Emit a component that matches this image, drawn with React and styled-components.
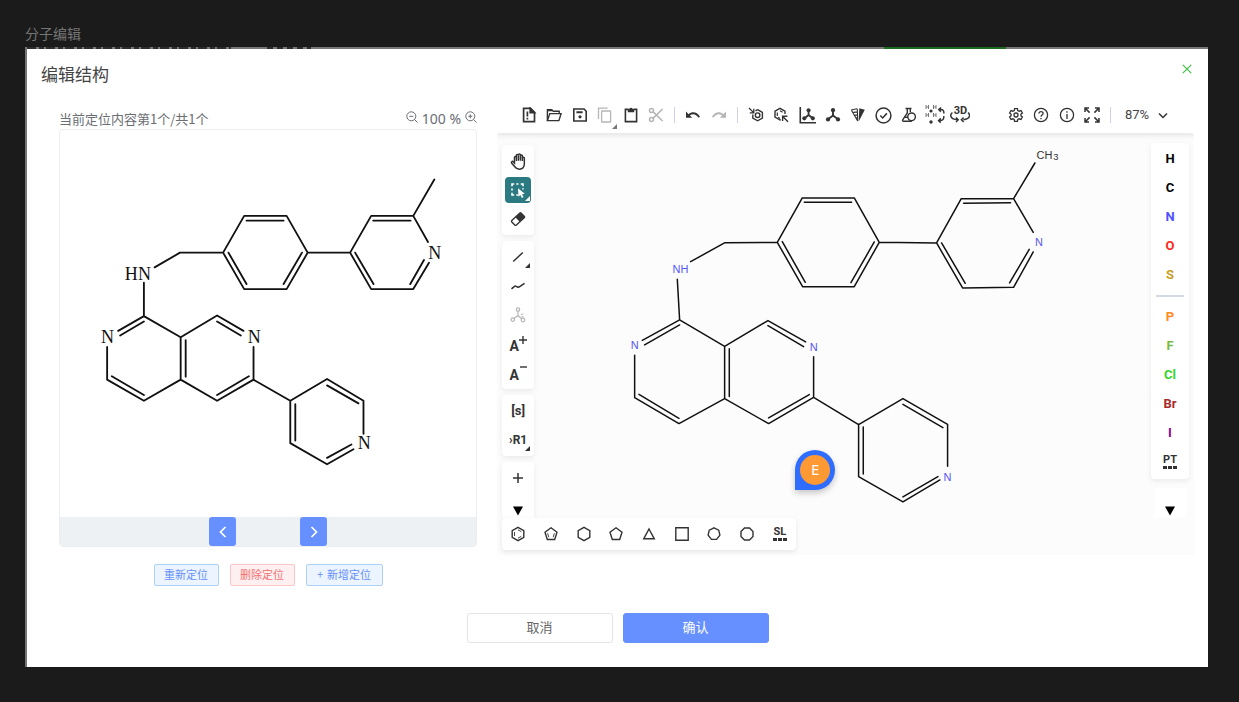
import React from "react";
import styled, { createGlobalStyle } from "styled-components";

const GlobalStyle = createGlobalStyle`
  * { box-sizing: border-box; }
  body {
    margin: 0;
    background: #1b1b1b;
    font-family: "Noto Sans", "Noto Sans CJK SC", sans-serif;
  }
  button, select {
    margin: 0;
    padding: 0;
    border: 0;
    background: none;
    font-family: inherit;
    color: inherit;
    cursor: pointer;
  }
`;

/* ---------- page and dialog frame ---------- */

const Page = styled.main`
  padding: 22px 31px 36px 25px;
`;

const FrameLabel = styled.div`
  height: 25px;
  line-height: 23px;
  font-size: 14px;
  font-family: "Noto Sans CJK SC", sans-serif;
  color: #757575;
`;

const Backdrop = styled.div`
  border-left: 2px solid #757575;
`;

const BackdropEdge = styled.div`
  height: 2px;
  background:
    linear-gradient(90deg, transparent 857px, #1d6b1f 857px, #1d6b1f 979px, transparent 979px),
    repeating-linear-gradient(90deg, #2c2c2c 0 9px, #777 9px 12px, #2c2c2c 12px 17px, #777 17px 19px) 0 0 / 204px 2px no-repeat,
    repeating-linear-gradient(90deg, #2c2c2c 0 6px, #777 6px 10px) 240px 0 / 44px 2px no-repeat,
    #777;
`;

const Dialog = styled.section`
  background: #fff;
  font-family: "Noto Sans CJK SC", sans-serif;
`;

const DialogHeader = styled.header`
  display: flex;
  justify-content: space-between;
  align-items: flex-start;
  height: 48px;
  padding: 13px 14px 0;
`;

const Title = styled.h1`
  margin: 0;
  font-size: 17px;
  line-height: 24px;
  font-weight: 400;
  color: #444;
`;

const CloseButton = styled.button`
  display: flex;
  align-items: center;
  justify-content: center;
  width: 14px;
  height: 14px;
  color: #3fbf48;
`;

const DialogBody = styled.div`
  display: grid;
  grid-template-columns: minmax(0, 3fr) minmax(0, 5fr);
  column-gap: 20px;
  align-items: start;
  padding: 0 14px 0 32px;
`;

const DialogFooter = styled.footer`
  display: flex;
  justify-content: center;
  gap: 10px;
  padding: 27px 0 24px;
`;

const FooterButton = styled.button`
  width: 146px;
  height: 30px;
  padding-bottom: 3px;
  border: 1px solid ${(p) => (p.$primary ? "#6690ff" : "#e2e4e8")};
  border-radius: 3px;
  background: ${(p) => (p.$primary ? "#6690ff" : "#fff")};
  color: ${(p) => (p.$primary ? "#fff" : "#666")};
  font-size: 13px;
  line-height: 20px;
`;

/* ---------- source preview ---------- */

const Preview = styled.div`
  display: flex;
  flex-direction: column;
`;

const PreviewHead = styled.div`
  display: flex;
  justify-content: space-between;
  height: 32px;
  padding-top: 12px;
  font-size: 13px;
  line-height: 20px;
  color: #6b6e73;
`;

const ZoomControls = styled.div`
  display: flex;
  align-items: center;
  gap: 4px;
  font: 14px/20px "Noto Sans", sans-serif;
`;

const ZoomButton = styled.button`
  display: flex;
  width: 12px;
  height: 16px;
`;

const PreviewCard = styled.div`
  border: 1px solid #ebedf0;
  border-radius: 4px;
  overflow: hidden;
`;

const Pager = styled.div`
  display: flex;
  justify-content: center;
  gap: 64px;
  background: #edf1f4;
`;

const PagerButton = styled.button`
  display: flex;
  align-items: center;
  justify-content: center;
  width: 27px;
  height: 29px;
  border-radius: 3px;
  background: #6690ff;
  color: #fff;
`;

const PreviewActions = styled.div`
  display: flex;
  justify-content: center;
  gap: 11px;
  margin-top: 17px;
`;

const TagButton = styled.button`
  display: flex;
  align-items: center;
  justify-content: center;
  gap: 4px;
  width: ${(p) => (p.$wide ? 77 : 65)}px;
  height: 22px;
  padding-bottom: 2px;
  border: 1px solid ${(p) => (p.$danger ? "#fbc8c8" : "#acd2fc")};
  border-radius: 2px;
  background: ${(p) => (p.$danger ? "#fef0f0" : "#ecf5ff")};
  color: ${(p) => (p.$danger ? "#f37070" : "#6690ff")};
  font-size: 11px;
  line-height: 18px;
`;

/* ---------- structure editor ---------- */

const Editor = styled.div`
  display: flex;
  flex-direction: column;
  color: #333;
`;

const TopBar = styled.div`
  position: relative;
  z-index: 1;
  display: flex;
  align-items: center;
  height: 36px;
  margin-bottom: 1px;
  padding-left: 19px;
  background: #fff;
  box-shadow: 0 2px 5px rgba(103, 104, 132, 0.18);
  clip-path: inset(0 0 -8px 0);
`;

const IconGroup = styled.div`
  display: grid;
  grid-template-columns: repeat(${(p) => p.$count}, 1fr);
  width: ${(p) => p.$width}px;
  margin-left: ${(p) => (p.$end ? "auto" : "0")};
`;

const ToolButton = styled.button`
  position: relative;
  display: flex;
  align-items: center;
  justify-content: center;
  width: ${(p) => (p.$fill ? "100%" : "26px")};
  height: 26px;
  border-radius: 4px;
  background: ${(p) => (p.$active ? "#2b7a82" : "transparent")};
  color: ${(p) => (p.$active ? "#fff" : p.$muted ? "#b5b5b5" : "#333")};
`;

const CornerMark = styled.span`
  position: absolute;
  right: 1px;
  bottom: ${(p) => (p.$low ? "-1px" : "2px")};
  border-style: solid;
  border-width: 0 0 5px 5px;
  border-color: transparent transparent ${(p) => p.$color || "#333"} transparent;
`;

const Separator = styled.span`
  width: 1px;
  height: 16px;
  margin: 0 5px;
  background: #cfd0ea;
`;

const ZoomField = styled.label`
  display: flex;
  align-items: center;
  gap: 7px;
  margin: 0 26px 0 9px;
`;

const ZoomSelect = styled.select`
  appearance: none;
  width: 26px;
  font: 13px/18px Roboto, sans-serif;
  color: #444;
`;

const Canvas = styled.div`
  position: relative;
  display: grid;
  background: #fcfcfc;
`;

const Drawing = styled.svg`
  grid-area: 1 / 1;
  display: block;
  width: 100%;
`;

const Overlay = styled.div`
  grid-area: 1 / 1;
  position: relative;
  display: grid;
  grid-template-columns: auto 1fr auto;
  grid-template-rows: 1fr auto;
  padding: 9px 5px 5px;
`;

const LeftTools = styled.div`
  display: flex;
  flex-direction: column;
  gap: 6px;
  width: 32px;
  padding-top: 2px;
`;

const ToolGroup = styled.div`
  display: flex;
  flex-direction: column;
  align-items: center;
  justify-content: space-between;
  flex-grow: ${(p) => (p.$grow ? 1 : 0)};
  gap: 3px;
  padding: 3px 0 ${(p) => (p.$grow ? 0 : 3)}px;
  border-radius: 4px;
  background: #fff;
  box-shadow: 0 2px 5px rgba(103, 104, 132, 0.12);
`;

const ScrollButton = styled.button`
  display: flex;
  align-items: center;
  justify-content: center;
  width: 32px;
  height: ${(p) => (p.$tall ? 30 : 14)}px;
  padding-top: ${(p) => (p.$tall ? 17 : 0)}px;
  background: #fff;
  color: #000;
`;

const RightTools = styled.div`
  grid-column: 3;
  display: flex;
  flex-direction: column;
  justify-content: space-between;
  align-items: center;
  width: 38px;
`;

const AtomPanel = styled.div`
  display: flex;
  flex-direction: column;
  align-items: center;
  gap: 3px;
  width: 100%;
  padding: 3px 0 4px;
  border-radius: 4px;
  background: #fff;
  box-shadow: 0 2px 5px rgba(103, 104, 132, 0.12);
`;

const AtomButton = styled.button`
  width: 26px;
  height: 26px;
  font: bold 13px/26px Roboto, sans-serif;
  color: ${(p) => p.$color};
`;

const AtomRule = styled.hr`
  width: 28px;
  height: 2px;
  margin: 4px 0;
  border: 0;
  background: #d3d9e6;
`;

const TemplateBar = styled.div`
  grid-column: 1 / 3;
  justify-self: start;
  display: grid;
  grid-template-columns: repeat(9, 1fr);
  align-items: center;
  width: 294px;
  height: 32px;
  border-radius: 4px;
  background: #fff;
  box-shadow: 0 2px 5px rgba(103, 104, 132, 0.14);
`;

const MoreLabel = styled.span`
  display: flex;
  flex-direction: column;
  align-items: center;
  font: bold 11px/10px Roboto, sans-serif;
`;

const MoreDots = styled.span`
  width: 14px;
  height: 3px;
  margin-top: 1px;
  background: repeating-linear-gradient(90deg, #333 0 4px, #fff 4px 5px);
`;

const GlyphLabel = styled.span`
  font: bold ${(p) => p.$size || 13}px/16px Roboto, sans-serif;
  white-space: nowrap;
`;

const ChargeLabel = styled.span`
  display: flex;
  align-items: flex-end;
  height: 18px;
  font: bold 14px/14px Roboto, sans-serif;
`;

const ChargeSign = styled.svg`
  align-self: flex-start;
  width: 8px;
  height: 10px;
  fill: none;
  stroke: currentColor;
  stroke-width: 1.4;
`;

const UserPin = styled.div`
  position: absolute;
  left: 298px;
  top: 316px;
  display: flex;
  align-items: center;
  justify-content: center;
  width: 40px;
  height: 40px;
  border-radius: 50% 50% 50% 0;
  background: #2f6dff;
  box-shadow: 0 3px 6px rgba(0, 0, 0, 0.22);
`;

const UserInitial = styled.span`
  width: 30px;
  height: 30px;
  border-radius: 50%;
  background: #ff9933;
  color: #fff;
  font: 15px/29px "Noto Sans", sans-serif;
  text-align: center;
`;

/* ---------- icons ---------- */

const Icon = ({ size = 16, sw = 1.4, box = 16, children }) => (
  <svg
    width={size}
    height={size}
    viewBox={`0 0 ${box} ${box}`}
    fill="none"
    stroke="currentColor"
    strokeWidth={sw}
    aria-hidden="true"
  >
    {children}
  </svg>
);

const solid = { fill: "currentColor", stroke: "none" };

const icons = {
  file: (
    <Icon sw={1.7}>
      <path d="M2.6 1.3h6.9l4 4v9.400H2.600z" />
      <path d="M9.200 1.300v4.300h4.300z" fill="currentColor" />
      <path d="M6.400 4.600v5M6.400 10.800v1.700" />
    </Icon>
  ),
  open: (
    <Icon>
      <path d="M1.400 13.600V2.600h4.400l1.400 1.600h6v2.400" />
      <path d="M1.400 13.600L3.800 6.600h11.300l-2.200 7z" />
      <path d="M1.400 3.200h4.600" strokeWidth="2" />
    </Icon>
  ),
  save: (
    <Icon sw={1.6}>
      <path d="M1.800 2h10.300l2.100 2.200V14H1.800z" />
      <path d="M4.400 5.200h6.200" strokeWidth="2" />
      <circle cx="8" cy="9.800" r="1.600" {...solid} />
    </Icon>
  ),
  copy: (
    <Icon sw={1.3}>
      <path d="M1.500 12V1.200h9" />
      <rect x="4.600" y="4" width="9" height="11" rx=".6" />
    </Icon>
  ),
  paste: (
    <Icon sw={1.6}>
      <path d="M5 2.400H2.400v12.200h11.200V2.400H11" />
      <path d="M4.800 1.800h1.600a1.700 1.700 0 013.200 0h1.600v3.400H4.800z" {...solid} />
    </Icon>
  ),
  cut: (
    <Icon sw={1.5}>
      <circle cx="3.500" cy="3.600" r="2" />
      <circle cx="3.500" cy="12.400" r="2" />
      <path d="M5.200 4.900L14.600 14M5.200 11.100L14.600 2" />
    </Icon>
  ),
  undo: (
    <Icon>
      <path d="M1 4.600v6.200h6.200L4.900 8.500C7.700 6.300 11 7 13.600 10.800L15 9.800C12 5 7.500 4 3.600 7.200z" {...solid} />
    </Icon>
  ),
  redo: (
    <Icon>
      <path d="M15 4.600v6.200H8.800L11.100 8.500C8.300 6.300 5 7 2.400 10.800L1 9.800C4 5 8.500 4 12.400 7.200z" {...solid} />
    </Icon>
  ),
  layout: (
    <Icon>
      <path d="M9.600 2.600l4.800 2.800v5.600l-4.800 2.800L4.800 11V7.600M7.500 3.800l2.100-1.200" />
      <circle cx="9.600" cy="8.200" r="2.300" />
      <path d="M1 1l4.400 4.400M5.800 1.800v4H1.800" strokeWidth="1.300" />
    </Icon>
  ),
  clean: (
    <Icon>
      <path d="M12 7V4.200L7 1.400 2 4.200v5.900l5 2.900.8-.4" />
      <path d="M4.300 5.500v3.400M7 3.800l2.600 1.500M5 10.200l2 1.200" strokeWidth="1.200" />
      <path d="M15 14.800L10 9.800M9.600 14V9.200h4.800" />
    </Icon>
  ),
  axes: (
    <Icon size={17}>
      <path d="M1.200 0v14.800H16" strokeWidth="1.500" />
      <path d="M9 3v4.500L5.200 10.500M9 7.500l3.900 3" strokeWidth="1.800" />
      <circle cx="9" cy="3" r="1.900" {...solid} />
      <circle cx="5" cy="10.700" r="1.900" {...solid} />
      <circle cx="13" cy="10.700" r="1.900" {...solid} />
    </Icon>
  ),
  molecule: (
    <Icon>
      <path d="M8 3v5.600l-5 3.600M8 8.600l5 3.600" strokeWidth="1.900" />
      <circle cx="8" cy="3.200" r="2.100" {...solid} />
      <circle cx="3" cy="12.400" r="2.100" {...solid} />
      <circle cx="13" cy="12.400" r="2.100" {...solid} />
    </Icon>
  ),
  stereo: (
    <Icon>
      <path d="M8.700 14.500L9.300 1.300l5.500 1.500z" {...solid} />
      <path d="M1.200 3l5.800-1.200M2.600 5.600l4.400-.7M4.200 8.200l3.100-.3M5.600 10.800l1.900-.1M7.700 14L1.300 3M7.300 1.800l.4 12" strokeWidth="1.100" />
    </Icon>
  ),
  check: (
    <Icon size={17}>
      <circle cx="8" cy="8" r="7" />
      <path d="M5 8l2.200 2.300L11.200 6" />
    </Icon>
  ),
  flask: (
    <Icon>
      <path d="M4.500 1.500h6M6.300 1.500V6L1.700 12.800c-.4.900 0 1.500.9 1.500h8.200M9.300 1.500V5" />
      <circle cx="10.600" cy="9.800" r="3.800" />
      <path d="M4 10.200h3" />
    </Icon>
  ),
  hydrogens: (
    <Icon size={20} box={20} sw={1}>
      <path d="M1 0v4M3.500 0v4M1 2h2.500M8.500 0v4M11 0v4M8.500 2H11M1 8v4M3.500 8v4M1 10h2.500M8.500 8v4M11 8v4M8.500 10H11" stroke="#777" />
      <circle cx="6" cy="6" r="1.600" {...solid} />
      <circle cx="6" cy="17" r="1.700" {...solid} />
      <path d="M14.500 4.500c3.500-.6 4.500 1 4.400 4M16 2.500l-2.200 2 2 2.200M18.900 11c0 3.500-1.400 4.800-5 4.600M15.800 13.400l-2.200 2.200 2.200 2" strokeWidth="1.500" />
    </Icon>
  ),
  rotate3d: (
    <Icon size={20} box={20} sw={1.5}>
      <text x="10.500" y="9" textAnchor="middle" {...solid} style={{ font: "bold 11px Roboto, sans-serif" }}>3D</text>
      <path d="M2.400 7.500C-.2 9.500.400 12.500 3 13.700c1.400.7 3 1 4.600 1.100M6 12.500l2.200 2.300L6 17M18 7.500c2.300 2 2 4.900-.600 6.200-1.200.6-2.600.9-4 1M13.600 12.500l-2.200 2.300L13.600 17" />
    </Icon>
  ),
  settings: (
    <Icon sw={1.3}>
      <path d="M6.600 1.600h2.800l.4 1.900 1.300.7 1.900-.6 1.400 2.400-1.500 1.300v1.400l1.500 1.300-1.400 2.400-1.900-.6-1.300.7-.4 1.900H6.600l-.4-1.900-1.300-.7-1.900.6-1.400-2.400 1.500-1.300V7.300L1.600 6l1.400-2.400 1.900.6 1.300-.7z" />
      <circle cx="8" cy="8" r="2" />
    </Icon>
  ),
  help: (
    <Icon sw={1.3}>
      <circle cx="8" cy="8" r="6.600" />
      <path d="M6 6.500c0-2.600 4.100-2.600 4.100-.1C10.100 8 8 8 8 9.700M8 10.900v1.400" />
    </Icon>
  ),
  info: (
    <Icon sw={1.3}>
      <circle cx="8" cy="8" r="6.600" />
      <path d="M8 7v5M8 4.200v1.500" />
    </Icon>
  ),
  expand: (
    <Icon sw={1.5}>
      <path d="M1 5V1h4M1 1l4.600 4.600M11 1h4v4M15 1l-4.600 4.600M1 11v4h4M1 15l4.600-4.600M11 15h4v-4M15 15l-4.600-4.600" />
    </Icon>
  ),
  hand: (
    <Icon size={17} sw={1.4}>
      <path d="M4.200 9.500V4.200c0-1.300 1.800-1.300 1.800 0V2.400c0-1.300 1.900-1.300 1.900 0v-.6c0-1.300 1.900-1.300 1.900 0v1c0-1.200 1.900-1.200 1.900 0v2c0-1.100 1.800-1.100 1.800 0v5.400c0 3.200-1.800 5-4.700 5-2.300 0-3.400-.9-4.500-2.500L1.500 9.400c-.7-1.200.8-2 1.600-1.100z" />
      <path d="M6 3.500v4M7.900 2.400v5M9.800 2.400v5M11.700 4v3.600" />
    </Icon>
  ),
  select: (
    <Icon size={18} box={18} sw={1.6}>
      <path d="M3 5.200V3h2.200M7.300 3h2.200M11.700 3H14v2.200M3 7.400v2.200M3 11.700V14h2.200M7.300 14h2.200M14 7.300v1.300" />
      <path d="M9 7.200l6.800 5.500-2.800.5 1.500 2.900-1.600.8-1.500-3-1.900 1.900z" {...solid} />
    </Icon>
  ),
  erase: (
    <Icon size={16}>
      <path d="M1.800 9.600L9.600 2.200c.5-.5 1.100-.5 1.600 0l3 3.100c.5.500.5 1 0 1.500L6.400 14c-.6.500-1.100.5-1.600 0l-3-3c-.4-.5-.4-1 0-1.400z" />
      <path d="M5.400 6.200l5-4.500 4.300 4.400-5.100 4.600z" {...solid} />
    </Icon>
  ),
  bond: (
    <Icon sw={1.5}>
      <path d="M3.200 12.500L12.800 3.500" />
    </Icon>
  ),
  chain: (
    <Icon sw={1.6}>
      <path d="M1.500 10.900l3-2.600c.7-.5 1.200-.3 1.800.1 1.200.9 2.200 1 3.400.2l4.800-3.200" />
    </Icon>
  ),
  enhanced: (
    <Icon sw={1.2}>
      <circle cx="8" cy="2.600" r="1.700" />
      <circle cx="2.800" cy="12.600" r="1.700" />
      <circle cx="13" cy="13" r="1.800" />
      <path d="M8 4.300v4.200l-4 3M8 8.500l3.600 3.200M11 7.700l2.200-1M11.600 9.500l2 .8" />
    </Icon>
  ),
  plus: (
    <Icon sw={1.5}>
      <path d="M8 3v10M3 8h10" />
    </Icon>
  ),
  down: (
    <Icon size={10} box={10}>
      <path d="M0 .5h10L5 9.500z" {...solid} />
    </Icon>
  ),
  close: (
    <Icon size={10} box={10} sw={1.2}>
      <path d="M.8.800l8.400 8.400M9.200.800L.8 9.200" />
    </Icon>
  ),
  chevron: (
    <Icon size={10} box={10} sw={1.5}>
      <path d="M1 3.500l4 4 4-4" />
    </Icon>
  ),
  prev: (
    <Icon size={12} box={12} sw={1.7}>
      <path d="M8.500 1L3.500 6l5 5" />
    </Icon>
  ),
  next: (
    <Icon size={12} box={12} sw={1.7}>
      <path d="M3.500 1l5 5-5 5" />
    </Icon>
  ),
  zoomOut: (
    <Icon size={12} box={12} sw={1}>
      <circle cx="5.300" cy="5.300" r="4.500" />
      <path d="M3.300 5.300h4M8.500 8.500l3 3" />
    </Icon>
  ),
  zoomIn: (
    <Icon size={12} box={12} sw={1}>
      <circle cx="5.300" cy="5.300" r="4.500" />
      <path d="M3.300 5.300h4M5.300 3.300v4M8.500 8.500l3 3" />
    </Icon>
  ),
};

const templates = [
  ["Benzene", <><path d="M8 1.300l5.800 3.300v6.800L8 14.700l-5.800-3.300V4.600z" /><path d="M4.500 6v4M8 12.200l3.300-1.900M8 3.800L11.300 5.700" strokeWidth=".9" /></>],
  ["Cyclopentadiene", <><path d="M8 1.800l6 4.400-2.300 7.300H4.300L2 6.200z" /><path d="M4.600 7.200l1.200 4M11.400 7.200l-1.200 4" strokeWidth=".9" /></>],
  ["Cyclohexane", <path d="M8 1.300l5.800 3.300v6.800L8 14.700l-5.800-3.300V4.600z" />],
  ["Cyclopentane", <path d="M8 1.800l6 4.400-2.300 7.300H4.300L2 6.200z" />],
  ["Cyclopropane", <path d="M8 3l5.300 9.800H2.700z" />],
  ["Cyclobutane", <path d="M1.800 1.800h12.400v12.400H1.800z" />],
  ["Cycloheptane", <path d="M8 1.900l4.700 2.300 1.200 5-3.300 4.200H5.400L2.100 9.200l1.200-5z" />],
  ["Cyclooctane", <path d="M5.500 2h5L14 5.500v5L10.500 14h-5L2 10.500v-5z" />],
];

const atoms = [
  ["H", "#000"], ["C", "#000"], ["N", "#5050ff"], ["O", "#ff2a20"], ["S", "#c99f24"],
  null,
  ["P", "#ff8a22"], ["F", "#7abb45"], ["Cl", "#32d62a"], ["Br", "#a62b2b"], ["I", "#940094"],
];

/* ---------- molecule drawings ---------- */

const previewBonds =
  "M1153 181L1090 290M1134 368L1090 290H964L901 400L964 509H1090L1137 430M970 304H1082M916 400L971 494M1081 494L1122 422" +
  "M774 400H901M521 400L584 290H711L774 400L711 509H584ZM591 304H702M537 400L591 494M757 400L702 494" +
  "M316 444L392 400H521M284 490V590M207 634L284 590L394 653V780L284 843L174 780V682M213 648L284 606M188 770L284 826" +
  "M394 653L503 588L582 634M503 606L574 648M409 662V771M394 780L503 843L612 780V682M503 826L598 770" +
  "M612 780L722 843L832 778L941 843V942M722 843V970L832 1033L911 988M737 853V962M832 797L926 851M832 1014L905 974";

const editorBonds =
  "M1305 99L1241 206M1300 307L1241 206L1084 206L1010 339L1088 474L1241 472L1300 366M1091 220L1232 218M1025 339L1096 460M1229 459L1288 358" +
  "M838 337L1010 339M532 337L607 204H763L838 337L763 470H608ZM613 217H755M547 335L616 457M823 336L753 458" +
  "M272 395L375 338L532 337M232 448L239 570M127 631L239 570L374 649V806L237 881L104 803V676M134 645L239 585M117 793L237 865" +
  "M374 649L504 572L617 636M504 587L611 650M388 656V800M374 806L506 881L641 802V680M506 864L628 794" +
  "M641 802L776 884L909 806L1043 883V1009M909 823L1029 893M776 884V1040L909 1116L1020 1050M790 891V1032M909 1101L1014 1040";

const BondPath = styled.path`
  fill: none;
  stroke: #111;
  stroke-width: ${(p) => p.$width};
  stroke-linejoin: round;
  stroke-linecap: round;
`;

const SerifAtom = styled.text`
  font: 54px "Liberation Serif", serif;
  fill: #111;
  text-anchor: middle;
`;

const SansAtom = styled.text`
  font: ${(p) => p.$size || 33}px "Liberation Sans", sans-serif;
  fill: ${(p) => p.$color || "#5558f5"};
  text-anchor: ${(p) => (p.$start ? "start" : "middle")};
`;

const PreviewMolecule = () => (
  <Drawing viewBox="33 33 1245 1158" role="img" aria-label="Source structure">
    <BondPath $width={5.5} d={previewBonds} />
    <SerifAtom x="266" y="481">HN</SerifAtom>
    {[[175, 671], [614, 671], [1154, 418], [943, 988]].map(([x, y]) => (
      <SerifAtom key={`${x}-${y}`} x={x} y={y}>N</SerifAtom>
    ))}
  </Drawing>
);

const EditorMolecule = () => (
  <Drawing viewBox="-309 12 2091 1263" role="img" aria-label="Editable structure">
    <BondPath $width={4.5} d={editorBonds} />
    <SansAtom $start x="218" y="430">NH</SansAtom>
    {[[104, 657], [641, 662], [1317, 349], [1043, 1053]].map(([x, y]) => (
      <SansAtom key={`${x}-${y}`} x={x} y={y}>N</SansAtom>
    ))}
    <SansAtom $start $color="#333" x="1310" y="87">CH</SansAtom>
    <SansAtom $start $color="#333" $size={28} x="1360" y="91">3</SansAtom>
  </Drawing>
);

/* ---------- composed parts ---------- */

const Tool = ({ icon, label, corner, children, ...rest }) => (
  <ToolButton type="button" aria-label={label} {...rest}>
    {icon ? icons[icon] : children}
    {corner && <CornerMark $color={corner} $low={rest.$fill} />}
  </ToolButton>
);

const More = ({ children }) => (
  <MoreLabel>
    {children}
    <MoreDots />
  </MoreLabel>
);

const Charge = ({ d }) => (
  <ChargeLabel>
    A
    <ChargeSign viewBox="0 0 8 10" aria-hidden="true"><path d={d} /></ChargeSign>
  </ChargeLabel>
);

const EditorTopBar = () => (
  <TopBar>
    <IconGroup $count={6} $width={153}>
      <Tool $fill icon="file" label="Clear canvas" />
      <Tool $fill icon="open" label="Open" />
      <Tool $fill icon="save" label="Save" />
      <Tool $fill $muted icon="copy" label="Copy" corner="#777" />
      <Tool $fill icon="paste" label="Paste" />
      <Tool $fill $muted icon="cut" label="Cut" />
    </IconGroup>
    <Separator />
    <IconGroup $count={2} $width={52}>
      <Tool $fill icon="undo" label="Undo" />
      <Tool $fill $muted icon="redo" label="Redo" />
    </IconGroup>
    <Separator />
    <IconGroup $count={9} $width={230}>
      <Tool $fill icon="layout" label="Layout" />
      <Tool $fill icon="clean" label="Clean up" />
      <Tool $fill icon="axes" label="Aromatize" />
      <Tool $fill icon="molecule" label="Dearomatize" />
      <Tool $fill icon="stereo" label="Calculate CIP" />
      <Tool $fill icon="check" label="Check structure" />
      <Tool $fill icon="flask" label="Calculated values" />
      <Tool $fill icon="hydrogens" label="Explicit hydrogens" />
      <Tool $fill icon="rotate3d" label="3D viewer" />
    </IconGroup>
    <IconGroup $count={4} $width={102} $end>
      <Tool $fill icon="settings" label="Settings" />
      <Tool $fill icon="help" label="Help" />
      <Tool $fill icon="info" label="About" />
      <Tool $fill icon="expand" label="Fullscreen" />
    </IconGroup>
    <Separator />
    <ZoomField>
      <ZoomSelect aria-label="Zoom" defaultValue="87">
        <option value="87">87%</option>
        <option value="100">100%</option>
      </ZoomSelect>
      {icons.chevron}
    </ZoomField>
  </TopBar>
);

const EditorCanvas = () => (
  <Canvas>
    <EditorMolecule />
    <Overlay>
      <LeftTools>
        <ToolGroup>
          <Tool icon="hand" label="Hand" />
          <Tool $active icon="select" label="Select" corner="#fff" />
          <Tool icon="erase" label="Erase" />
        </ToolGroup>
        <ToolGroup>
          <Tool icon="bond" label="Bond" corner="#333" />
          <Tool icon="chain" label="Chain" />
          <Tool $muted icon="enhanced" label="Stereochemistry" />
          <Tool label="Charge plus"><Charge d="M4 1v8M0 5h8" /></Tool>
          <Tool label="Charge minus"><Charge d="M1 3h7" /></Tool>
        </ToolGroup>
        <ToolGroup>
          <Tool label="S-group"><GlyphLabel>[s]</GlyphLabel></Tool>
          <Tool label="R-group" corner="#333"><GlyphLabel $size={12}>›R1</GlyphLabel></Tool>
        </ToolGroup>
        <ToolGroup $grow>
          <Tool icon="plus" label="Reaction plus" />
          <ScrollButton type="button" aria-label="Scroll tools down">{icons.down}</ScrollButton>
        </ToolGroup>
      </LeftTools>
      <RightTools>
        <AtomPanel>
          {atoms.map((atom) =>
            atom ? (
              <AtomButton key={atom[0]} type="button" $color={atom[1]}>{atom[0]}</AtomButton>
            ) : (
              <AtomRule key="rule" />
            )
          )}
          <Tool label="Periodic table"><More>PT</More></Tool>
        </AtomPanel>
        <ScrollButton type="button" $tall aria-label="Scroll atoms down">{icons.down}</ScrollButton>
      </RightTools>
      <TemplateBar>
        {templates.map(([name, shape]) => (
          <Tool key={name} $fill label={name}><Icon>{shape}</Icon></Tool>
        ))}
        <Tool $fill label="Structure library"><More>SL</More></Tool>
      </TemplateBar>
    </Overlay>
    <UserPin><UserInitial>E</UserInitial></UserPin>
  </Canvas>
);

export default function App() {
  return (
    <Page>
      <GlobalStyle />
      <FrameLabel>分子编辑</FrameLabel>
      <Backdrop>
        <BackdropEdge />
        <Dialog role="dialog" aria-labelledby="dialog-title">
          <DialogHeader>
            <Title id="dialog-title">编辑结构</Title>
            <CloseButton type="button" aria-label="关闭">{icons.close}</CloseButton>
          </DialogHeader>
          <DialogBody>
            <Preview>
              <PreviewHead>
                <span>当前定位内容第1个/共1个</span>
                <ZoomControls>
                  <ZoomButton type="button" aria-label="缩小">{icons.zoomOut}</ZoomButton>
                  <span>100 %</span>
                  <ZoomButton type="button" aria-label="放大">{icons.zoomIn}</ZoomButton>
                </ZoomControls>
              </PreviewHead>
              <PreviewCard>
                <PreviewMolecule />
                <Pager>
                  <PagerButton type="button" aria-label="上一个">{icons.prev}</PagerButton>
                  <PagerButton type="button" aria-label="下一个">{icons.next}</PagerButton>
                </Pager>
              </PreviewCard>
              <PreviewActions>
                <TagButton type="button">重新定位</TagButton>
                <TagButton type="button" $danger>删除定位</TagButton>
                <TagButton type="button" $wide><span>+</span>新增定位</TagButton>
              </PreviewActions>
            </Preview>
            <Editor>
              <EditorTopBar />
              <EditorCanvas />
            </Editor>
          </DialogBody>
          <DialogFooter>
            <FooterButton type="button">取消</FooterButton>
            <FooterButton type="button" $primary>确认</FooterButton>
          </DialogFooter>
        </Dialog>
      </Backdrop>
    </Page>
  );
}
